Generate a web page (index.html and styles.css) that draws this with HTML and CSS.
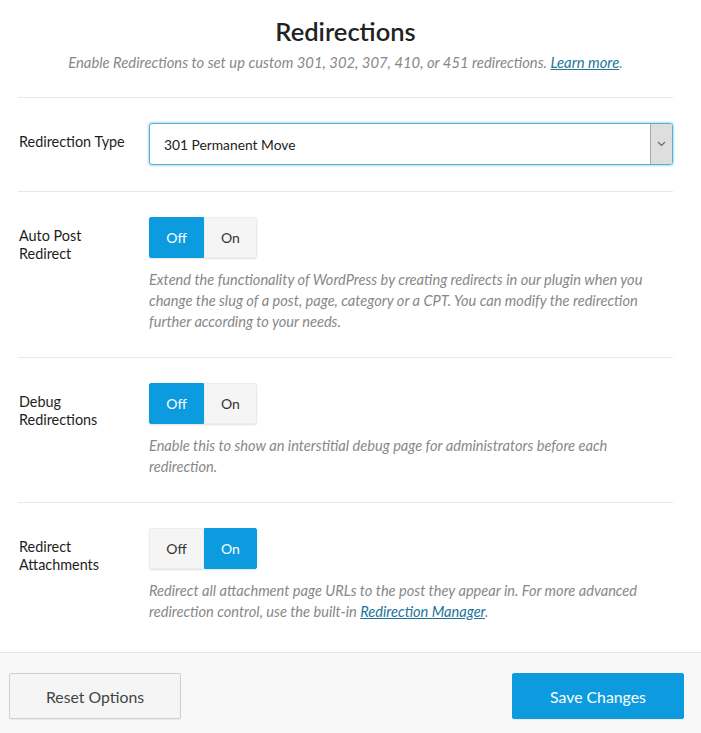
FILE: index.html
```html
<!DOCTYPE html>
<html>

<head>
    <meta charset="utf-8">
    <link rel="stylesheet" href="styles.css">
</head>

<body>

    <div class="panel">
        <div class="panel-head">
            <h1>Redirections</h1>
            <p class="intro">Enable Redirections to set up custom 301, 302, 307, 410, or 451 redirections. <a href="#">Learn more</a>.</p>
        </div>

        <div class="field">
            <label class="field-label">Redirection Type</label>
            <div class="field-control">
                <div class="select">
                    <span>301 Permanent Move</span>
                    <span class="select-arrow">
                        <svg width="9" height="6" viewBox="0 0 9 6"><path d="M1 1l3.5 3.5L8 1" fill="none" stroke="#666" stroke-width="1.1"/></svg>
                    </span>
                </div>
            </div>
        </div>

        <div class="field">
            <label class="field-label">Auto Post Redirect</label>
            <div class="field-control">
                <div class="toggle">
                    <span class="active">Off</span>
                    <span>On</span>
                </div>
                <p class="desc">Extend the functionality of WordPress by creating redirects in our plugin when you change the slug of a post, page, category or a CPT. You can modify the redirection further according to your needs.</p>
            </div>
        </div>

        <div class="field">
            <label class="field-label">Debug Redirections</label>
            <div class="field-control">
                <div class="toggle">
                    <span class="active">Off</span>
                    <span>On</span>
                </div>
                <p class="desc">Enable this to show an interstitial debug page for administrators before each redirection.</p>
            </div>
        </div>

        <div class="field">
            <label class="field-label">Redirect Attachments</label>
            <div class="field-control">
                <div class="toggle">
                    <span>Off</span>
                    <span class="active">On</span>
                </div>
                <p class="desc">Redirect all attachment page URLs to the post they appear in. For more advanced redirection control, use the built-in <a href="#">Redirection Manager</a>.</p>
            </div>
        </div>
    </div>

    <div class="footer">
        <button class="btn">Reset Options</button>
        <button class="btn btn-primary">Save Changes</button>
    </div>

</body>

</html>
```

FILE: styles.css
```css
body {
    margin: 0;
    font-family: Lato, "Open Sans", sans-serif;
    color: #222;
    background: #fff;
}

.panel {
    margin: 0 28px 0 18px;
}

.panel-head {
    text-align: center;
    padding-top: 14px;
    padding-bottom: 25px;
    border-bottom: 1px solid #e8e8e8;
}

.panel-head h1 {
    margin: 0;
    font-size: 25.5px;
    font-weight: 600;
    line-height: 34px;
}

.intro {
    margin: 4px 0 0;
    font-size: 14.8px;
    font-style: italic;
    line-height: 20px;
    color: #888;
}

a {
    color: #21759b;
}

.field {
    display: flex;
    padding: 25px 0;
    border-bottom: 1px solid #e8e8e8;
}

.field:nth-child(2) {
    padding-bottom: 26px;
}

.field:last-child {
    border-bottom: none;
    padding-bottom: 30px;
}

.field-label {
    width: 131px;
    flex-shrink: 0;
    padding: 10px 16px 0 1px;
    box-sizing: border-box;
    font-size: 14.4px;
    line-height: 18px;
    color: #1e1e1e;
}

.field-control {
    flex: 1;
}

.select {
    display: flex;
    align-items: stretch;
    justify-content: space-between;
    height: 42px;
    box-sizing: border-box;
    border: 1px solid #5aaed0;
    border-radius: 3px;
    box-shadow: 0 0 2px 1px rgba(30, 160, 220, .35);
    font-size: 13.8px;
    color: #222;
}

.select > span:first-child {
    display: flex;
    align-items: center;
    padding-left: 14px;
}

.select-arrow {
    display: flex;
    align-items: center;
    justify-content: center;
    width: 21px;
    background: #dedede;
    border-left: 1px solid #a8a8a8;
    border-radius: 0 2px 2px 0;
}

.toggle {
    display: inline-flex;
    height: 41px;
    border-radius: 2px;
    box-shadow: 0 1px 2px rgba(0, 0, 0, .12);
}

.toggle span {
    width: 54px;
    display: flex;
    align-items: center;
    justify-content: center;
    font-size: 14px;
    color: #333;
    background: #f5f5f5;
    border: 1px solid #ececec;
    box-sizing: border-box;
}

.toggle span:first-child {
    width: 55px;
    border-radius: 2px 0 0 2px;
}

.toggle span:last-child {
    width: 53px;
    border-radius: 0 2px 2px 0;
}

.toggle span.active {
    background: #0d9be0;
    border-color: #0d9be0;
    color: #fff;
}

.desc {
    margin: 11px 0 0;
    font-size: 14.6px;
    font-style: italic;
    line-height: 21px;
    color: #888;
}

.footer {
    display: flex;
    justify-content: space-between;
    padding: 20px 17px 15px 9px;
    background: #f8f8f8;
    border-top: 1px solid #e6e6e6;
}

.btn {
    width: 172px;
    height: 46px;
    font-family: inherit;
    font-size: 15.8px;
    color: #444;
    background: #f5f5f5;
    border: 1px solid #cfcfcf;
    border-radius: 2px;
    box-shadow: 0 1px 1px rgba(0, 0, 0, .06);
}

.btn-primary {
    color: #fff;
    background: #0d9be0;
    border-color: #0d9be0;
}
```
